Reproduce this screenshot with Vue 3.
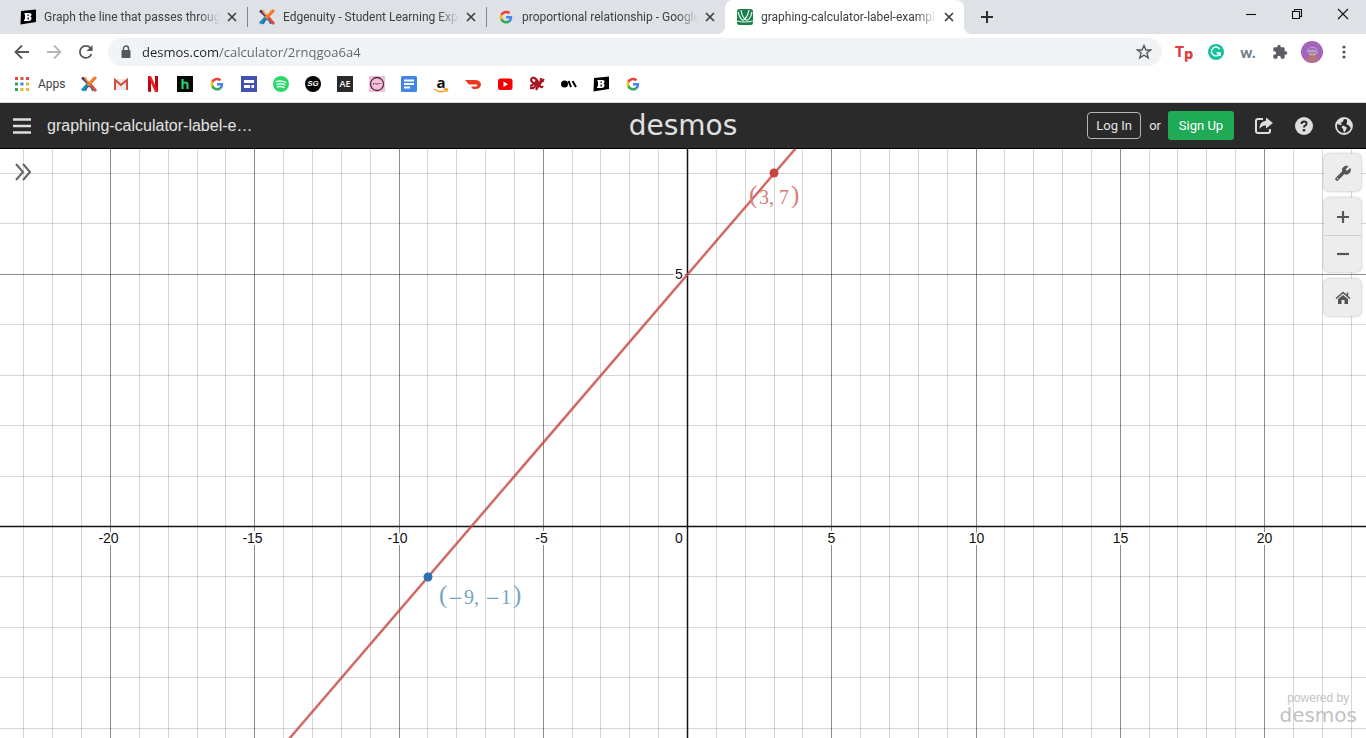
<script setup>
import { ref } from 'vue'

const url = ref('desmos.com/calculator/2rnqgoa6a4')
const tabs = [
  { icon: 'brainly', title: 'Graph the line that passes through the points' },
  { icon: 'edge', title: 'Edgenuity - Student Learning Experience' },
  { icon: 'google', title: 'proportional relationship - Google Search' },
  { icon: 'desmos', title: 'graphing-calculator-label-example', active: true },
]
const bookmarks = [
  ['edge', 'Edgenuity'], ['gmail', 'Gmail'], ['netflix', 'Netflix'], ['hulu', 'Hulu'], ['google', 'Google'],
  ['sites', 'Sites'], ['spotify', 'Spotify'], ['sg', 'SG'], ['ae', 'AE'], ['pink', 'Shop'], ['docs', 'Docs'],
  ['amazon', 'Amazon'], ['dash', 'DoorDash'], ['youtube', 'YouTube'], ['sx', 'SX'], ['dots', 'Music'],
  ['brainly', 'Brainly'], ['google', 'Google Search'],
].map(([icon, name]) => ({ icon, name }))

const unitX = 28.85
const unitY = 50.43
const px = (x) => Math.round(687 + x * unitX) + 0.5
const py = (y) => Math.round(377 - y * unitY) + 0.5
const columns = Array.from({ length: 47 }, (_, i) => i - 23)
const rows = [7, 6, 5, 4, 3, 2, 1, -1, -2, -3, -4]
const xLabels = [-20, -15, -10, -5, 5, 10, 15, 20]
const labelX = (n) => px(n) - (n < 0 ? 2 : 0)
</script>

<template>
  <div class="window">
    <svg class="defs" aria-hidden="true">
      <symbol id="brainly" viewBox="0 0 16 16"><path d="M1 2L16 0.500V13L0.500 15.500Z" fill="#000" /><path d="M4.500 4H9Q12 4 11.500 6Q11.300 7.200 10.300 7.600Q12 8.200 11.500 10Q11 12 8.500 12H4V10.500H5V5.500H4.500ZM7.500 5.500V7H8.700V5.500ZM7.500 8.500V10.500H8.900V8.500Z" fill="#fff" fill-rule="evenodd" /></symbol>
      <symbol id="edge" viewBox="0 0 16 16" fill="none" stroke-width="2.800">
        <path d="M1 1.500L7 7" stroke="#59366d" /><path d="M4 1Q8 11 12.500 1.500" stroke="#f2a33a" stroke-width="2" /><path d="M15 1L9.500 7" stroke="#ef7a2f" />
        <path d="M7 8L1 14.500" stroke="#1791b4" /><path d="M4 15Q8 5 12 15" stroke="#276db0" stroke-width="2" /><path d="M9 8L15 15" stroke="#df4b38" /><circle cx="8" cy="8" r="2" fill="#ef7a2f" />
      </symbol>
      <symbol id="google" viewBox="0 0 48 48">
        <g transform="translate(5 5) scale(.8)">
          <path fill="#EA4335" d="M24 9.500c3.540 0 6.710 1.220 9.210 3.600l6.850-6.850C35.900 2.380 30.470 0 24 0 14.620 0 6.510 5.380 2.560 13.220l7.980 6.190C12.430 13.720 17.740 9.500 24 9.500z" />
          <path fill="#4285F4" d="M46.980 24.550c0-1.570-.15-3.090-.38-4.550H24v9.020h12.940c-.58 2.960-2.260 5.480-4.780 7.180l7.730 6c4.510-4.180 7.090-10.360 7.090-17.650z" />
          <path fill="#FBBC05" d="M10.530 28.590A14.500 14.500 0 0 1 9.770 24c0-1.600.27-3.140.76-4.590l-7.980-6.190A23.900 23.900 0 0 0 0 24c0 3.880.92 7.540 2.560 10.780z" />
          <path fill="#34A853" d="M24 48c6.480 0 11.930-2.130 15.890-5.810l-7.730-6c-2.150 1.450-4.920 2.300-8.160 2.300-6.260 0-11.570-4.220-13.470-9.910l-7.980 6.190C6.510 42.620 14.620 48 24 48z" />
        </g>
      </symbol>
      <symbol id="desmos" viewBox="0 0 16 16"><rect width="16" height="16" rx="2.500" fill="#188049" /><path d="M1 3Q4 13 7.500 10.500Q11 7 12 1M4 1Q5 8 9 11Q13 12 15 3M0 12Q8 14 16 12" fill="none" stroke="#e9f8ef" stroke-width="1.200" /></symbol>
      <symbol id="gmail" viewBox="0 0 16 16"><path d="M1 3H15V14H1Z" fill="#eee8e7" /><path d="M2 14V4L8 9L14 4V14" fill="none" stroke="#d54b3d" stroke-width="2" /></symbol>
      <symbol id="netflix" viewBox="0 0 16 16"><path d="M3 0H6V16L3 15.500ZM10 0H13V15.500L10 16Z" fill="#b60710" /><path d="M3 0H6L13 15.500L10 16Z" fill="#ed1c25" /></symbol>
      <symbol id="hulu" viewBox="0 0 16 16"><path d="M0 0H16V16H0Z" fill="#050805" /><path d="M5.500 3V13M5.500 8Q5.500 6.500 8 6.500Q10.500 6.500 10.500 8.500V13" fill="none" stroke="#24ce72" stroke-width="2.200" /></symbol>
      <symbol id="sites" viewBox="0 0 16 16"><path d="M0 0H16V16H0Z" fill="#4253b1" /><path d="M3 4H13V7H3ZM3 9H9V12H3ZM10.500 9H13V12H10.500Z" fill="#fff" /></symbol>
      <symbol id="spotify" viewBox="0 0 16 16"><circle cx="8" cy="8" r="8" fill="#2bd66b" /><path d="M3.500 5.500Q8.500 4 12.700 6.500M4 8.300Q8.300 7 12 9M4.500 10.800Q8 10 11 11.500" fill="none" stroke="#eafff1" stroke-width="1.400" stroke-linecap="round" /></symbol>
      <symbol id="pink" viewBox="0 0 16 16"><path d="M0 0H16V16H0Z" fill="#f6bfd8" /><circle cx="8" cy="8" r="6.500" fill="none" stroke="#4c3041" stroke-width="1.300" /><path d="M4.500 7V9M6 7.500H7M8 7V9M9.500 7.500H11.500" stroke="#73445b" /></symbol>
      <symbol id="docs" viewBox="0 0 16 16"><rect width="16" height="16" rx="1.500" fill="#4285e8" /><path d="M3 4.500H13M3 8H13M3 11.500H9" stroke="#fff" stroke-width="1.800" /></symbol>
      <symbol id="dash" viewBox="0 0 16 16"><path d="M0 4H10Q15 4 16 8Q16 13 10 13H8L6 10.500H11Q13 10 12 8.500L4 8.500Z" fill="#ee3824" /></symbol>
      <symbol id="youtube" viewBox="0 0 16 16"><rect x="1" y="2.500" width="14.500" height="11.500" rx="2.500" fill="#f40000" /><path d="M6.500 5.500L11 8.200L6.500 11Z" fill="#fff" /></symbol>
      <symbol id="sx" viewBox="0 0 16 16"><path d="M7 3Q3 0 2 4Q3 7 7 8Q6 13 1 12M1 10Q5 9 8 4M7 3Q10 6 9 9Q12 7 12 2M7 14Q10 8 15 3M10 8Q12 13 14 10M11 4L15 5" fill="none" stroke="#a51522" stroke-width="2.200" /></symbol>
      <symbol id="dots" viewBox="0 0 16 16"><circle cx="3.500" cy="8" r="3.500" fill="#000" /><path d="M7.500 5L10 11M11.500 5L15 11" stroke="#000" stroke-width="2" /></symbol>
    </svg>

    <nav class="tabs" aria-label="Tabs">
      <div v-for="tab in tabs" :key="tab.title" class="tab" :class="{ active: tab.active }">
        <svg class="favicon"><use :href="'#' + tab.icon" /></svg>
        <span class="tab-title">{{ tab.title }}</span>
        <button class="close" aria-label="Close tab"><svg viewBox="0 0 10 10"><path d="M1 1L9 9M9 1L1 9" /></svg></button>
      </div>
      <button class="new-tab" aria-label="New tab"><svg width="12" height="12" viewBox="0 0 12 12"><path d="M6 0V12M0 6H12" /></svg></button>
      <div class="window-controls">
        <button aria-label="Minimize"><svg viewBox="0 0 12 12"><path d="M1 6.500H11" /></svg></button>
        <button aria-label="Restore"><svg viewBox="0 0 12 12"><path d="M1.500 3.500H8.500V10.500H1.500ZM3.500 3V1.500H10.500V8.500H9" /></svg></button>
        <button aria-label="Close"><svg viewBox="0 0 12 12"><path d="M1 1L11 11M11 1L1 11" /></svg></button>
      </div>
    </nav>

    <div class="toolbar">
      <button aria-label="Back"><svg class="nav" viewBox="0 0 16 16"><path d="M15 8H2M8 1.500L1.500 8L8 14.500" /></svg></button>
      <button aria-label="Forward"><svg class="nav faded" viewBox="0 0 16 16"><path d="M1 8H14M8 1.500L14.500 8L8 14.500" /></svg></button>
      <button aria-label="Reload"><svg class="nav" viewBox="0 0 16 16"><path d="M13.500 10A6 6 0 1 1 12.500 4L14 5.500" /><path d="M14.500 1V7H8.500Z" fill="#54575b" stroke="none" /></svg></button>
      <div class="address">
        <svg width="10" height="14" viewBox="0 0 10 14"><rect x="0.500" y="5" width="9" height="8" rx="1" fill="#54575b" /><path d="M2.500 5V3.500A2.500 2.500 0 0 1 7.500 3.500V5" fill="none" stroke="#54575b" stroke-width="1.400" /></svg>
        <input v-model="url" aria-label="Address" spellcheck="false" />
        <button aria-label="Bookmark"><svg width="16" height="16" viewBox="0 0 16 16"><path d="M8 1.500L9.900 6H14.700L10.900 9L12.300 14L8 11.200L3.700 14L5.100 9L1.300 6H6.100Z" fill="none" stroke="#54575b" stroke-width="1.400" /></svg></button>
      </div>
      <div class="extensions">
        <button class="tp" aria-label="Teleparty"><span>T</span><span class="low">p</span></button>
        <button aria-label="Grammarly"><svg viewBox="0 0 16 16"><circle cx="8" cy="8" r="8" fill="#15c39a" /><path d="M11.500 5A4.400 4.400 0 1 0 12 9H8.500M12 9V12" fill="none" stroke="#fff" stroke-width="1.500" /></svg></button>
        <button class="w" aria-label="Word tool">w.</button>
        <button aria-label="Extensions"><svg viewBox="0 0 24 24"><path fill="#5b5e62" d="M20.500 11H19V7a2 2 0 0 0-2-2h-4V3.500a2.500 2.500 0 0 0-5 0V5H4a2 2 0 0 0-2 2v3.800h1.500a2.700 2.700 0 0 1 0 5.400H2V20a2 2 0 0 0 2 2h3.800v-1.500a2.700 2.700 0 0 1 5.400 0V22H17a2 2 0 0 0 2-2v-4h1.500a2.500 2.500 0 0 0 0-5z" /></svg></button>
        <button aria-label="Profile"><svg class="avatar" viewBox="0 0 22 22"><circle cx="11" cy="11" r="11" fill="#a264bd" /><path d="M6 9Q11 3 16 8L17 13H7Z" fill="#b9a2c9" /><path d="M8 8.500Q12 6.500 15 9M7 12H16" fill="none" stroke="#8a5bb0" stroke-width="1.200" /><path d="M8 13.500H15" stroke="#e5b35c" stroke-width="1.500" /><path d="M4 18Q11 13 18 17Q15 21 11 21Q7 21 4 18Z" fill="#b47771" /></svg></button>
        <button aria-label="Menu"><svg viewBox="0 0 16 16" fill="#54575b"><circle cx="8" cy="3" r="1.600" /><circle cx="8" cy="8" r="1.600" /><circle cx="8" cy="13" r="1.600" /></svg></button>
      </div>
    </div>

    <nav class="bookmarks" aria-label="Bookmarks">
      <a class="apps" href="#apps">
        <svg width="14" height="14" viewBox="0 0 14 14" stroke-width="3"><path d="M0 1.500H3M5.500 1.500H8.500M11 1.500H14" stroke="#df4b3d" /><path d="M0 7H3M0 12.500H3" stroke="#36a35a" /><path d="M5.500 7H8.500" stroke="#4285e8" /><path d="M11 7H14M11 12.500H14M5.500 12.500H8.500" stroke="#efb52d" /></svg>
        Apps
      </a>
      <a v-for="item in bookmarks" :key="item.name" :href="'#' + item.icon" :aria-label="item.name">
        <span v-if="item.icon === 'sg'" class="badge sg">SG</span>
        <span v-else-if="item.icon === 'ae'" class="badge ae">AE</span>
        <span v-else-if="item.icon === 'amazon'" class="badge amazon">a<svg viewBox="0 0 16 5"><path d="M1 1Q8 6 13 2M10.500 1H14.500L13.500 4" fill="none" stroke="#f59b20" stroke-width="1.400" /></svg></span>
        <svg v-else class="favicon"><use :href="'#' + item.icon" /></svg>
      </a>
    </nav>

    <header class="header">
      <div class="left">
        <button aria-label="Open menu"><svg width="18" height="16" viewBox="0 0 18 16"><path d="M0 1.500H18M0 8H18M0 14.500H18" stroke="#dedede" stroke-width="2.600" /></svg></button>
        <h1>graphing-calculator-label-e…</h1>
      </div>
      <a class="logo" href="#home">desmos</a>
      <div class="right">
        <button class="login">Log In</button>
        <span class="or">or</span>
        <button class="signup">Sign Up</button>
        <button class="tool" aria-label="Share"><svg viewBox="0 0 18 18"><path d="M8 2H3Q1 2 1 4V14Q1 16 3 16H13Q15 16 15 14V12" fill="none" stroke="#dedede" stroke-width="2" /><path d="M11 0.500L18 6L11 11.500V8.500Q7 8 4.500 12Q4.500 4 11 3.700Z" fill="#dedede" /></svg></button>
        <button class="tool" aria-label="Help"><svg viewBox="0 0 18 18"><circle cx="9" cy="9" r="9" fill="#dedede" /><path d="M6.500 7Q6.500 4.500 9 4.500Q11.700 4.500 11.500 6.800Q11.300 8 10 8.700Q9 9.200 9 10.500" fill="none" stroke="#2a2a2a" stroke-width="2" /><circle cx="9" cy="13.300" r="1.300" fill="#2a2a2a" /></svg></button>
        <button class="tool" aria-label="Language"><svg viewBox="0 0 18 18"><circle cx="9" cy="9" r="8" fill="none" stroke="#dedede" stroke-width="1.800" /><path d="M2.500 4L7 1L9 2.500L7.500 5L5.500 6L7 8L5 8L2 6.500ZM8 8.500L12 10.500L11 13L9 16L8 12L6.500 10ZM12 2L15 4L17 9L15.500 11L14 8.500L11.500 7.500L12 5Z" fill="#dedede" /></svg></button>
      </div>
    </header>

    <main class="graph">
      <svg class="plot" viewBox="0 0 1366 589" preserveAspectRatio="xMidYMin slice" role="img" aria-label="Line through (3, 7) and (−9, −1)">
        <line v-for="n in columns" :key="'c' + n" :x1="px(n)" :x2="px(n)" y1="0" y2="589" :class="n % 5 ? 'minor' : 'major'" />
        <line v-for="n in rows" :key="'r' + n" x1="0" x2="1366" :y1="py(n)" :y2="py(n)" :class="n % 5 ? 'minor' : 'major'" />
        <path d="M0 377.500H1366M687.500 0V589" class="axis" />
        <text v-for="n in xLabels" :key="'x' + n" :x="labelX(n)" y="394" class="number">{{ n }}</text>
        <text x="679" y="394" class="number">0</text>
        <text x="679" y="130" class="number">5</text>
        <path d="M289 590L796 -1" class="line" />
        <circle cx="774" cy="24" r="4.500" fill="#c74440" />
        <circle cx="428" cy="428" r="4.500" fill="#2d70b3" />
        <text class="math red"><tspan x="749" y="54" class="paren">(</tspan><tspan x="759" y="55">3,</tspan><tspan x="779" y="55">7</tspan><tspan x="791" y="54" class="paren">)</tspan></text>
        <text class="math blue"><tspan x="439" y="454" class="paren">(</tspan><tspan x="448" y="455" class="minus">−</tspan><tspan x="464" y="455">9,</tspan><tspan x="485" y="455" class="minus">−</tspan><tspan x="501" y="455">1</tspan><tspan x="513" y="454" class="paren">)</tspan></text>
      </svg>
      <button class="expand" aria-label="Show expression list"><svg width="16" height="18" viewBox="0 0 16 18"><path d="M1 1L8 9L1 17M8 1L15 9L8 17" fill="none" stroke="#666" stroke-width="2" /></svg></button>
      <div class="controls">
        <button class="pad" aria-label="Graph settings"><svg viewBox="0 0 16 16"><path d="M2 14L9 7" stroke="#555" stroke-width="3.400" stroke-linecap="round" /><path d="M13 1.500L10.500 4V6H12.500L15 3.500A4 4 0 1 1 13 1.500Z" fill="#555" stroke="#555" /><circle cx="2.500" cy="13.500" r="0.700" fill="#eee" /></svg></button>
        <div class="zoom">
          <button aria-label="Zoom in"><svg viewBox="0 0 16 16"><path d="M8 2V14M2 8H14" stroke="#555" stroke-width="2.200" /></svg></button>
          <button aria-label="Zoom out"><svg viewBox="0 0 16 16"><path d="M2 8H14" stroke="#555" stroke-width="2.200" /></svg></button>
        </div>
        <button class="pad" aria-label="Default view"><svg viewBox="0 0 16 16"><path d="M1 8.500L8 2.500L15 8.500M12.500 5.500V2.500" fill="none" stroke="#555" stroke-width="1.600" /><path d="M3 9L8 5L13 9V14H9.500V10H6.500V14H3Z" fill="#555" /></svg></button>
      </div>
      <div class="powered"><span>powered by</span><span class="brand">desmos</span></div>
    </main>
  </div>
</template>

<style>
body { overflow: hidden; }
</style>

<style scoped>
.window { display: flex; flex-direction: column; height: 100vh; background: #fff; font-family: Roboto, "Open Sans", sans-serif; font-size: 12px; color: #3c4043; }
button { display: flex; align-items: center; justify-content: center; padding: 0; border: 0; background: none; color: inherit; font: inherit; }
a { color: inherit; text-decoration: none; }
svg { flex: none; }
.defs { display: none; }
.favicon { display: block; width: 16px; height: 16px; }
.tabs { display: flex; flex: none; height: 34px; padding-left: 8px; background: #dee1e6; }
.tab { position: relative; display: flex; flex: 0 1 239px; min-width: 0; box-sizing: border-box; align-items: center; padding: 0 7px 0 12px; border-radius: 8px 8px 0 0; }
.tab:nth-child(-n+2)::after { content: ""; position: absolute; top: 7px; right: -1px; width: 1px; height: 20px; background: #80868b; }
.tab.active { background: #fff; }
.tab.active::before, .tab.active::after { content: ""; position: absolute; bottom: 0; width: 8px; height: 8px; }
.tab.active::before { left: -8px; background: radial-gradient(circle at 0 0, #dee1e6 8px, #fff 8px); }
.tab.active::after { right: -8px; background: radial-gradient(circle at 100% 0, #dee1e6 8px, #fff 8px); }
.tab-title { flex: 1; min-width: 0; margin: 0 4px 0 8px; overflow: hidden; white-space: nowrap; line-height: 18px; mask-image: linear-gradient(to right, #000 88%, transparent); }
.close { width: 16px; height: 16px; }
.close svg { width: 10px; height: 10px; stroke: #3c4043; stroke-width: 1.700; }
.new-tab { width: 28px; margin-left: 9px; }
.new-tab svg { stroke: #2c2f32; stroke-width: 2; }
.window-controls { display: flex; height: 28px; margin-left: auto; }
.window-controls button { width: 46px; }
.window-controls svg { width: 12px; height: 12px; fill: none; stroke: #111; stroke-width: 1.100; }
.toolbar { display: flex; flex: none; height: 36px; align-items: center; padding: 0 6px; }
.toolbar > button { width: 32px; height: 32px; }
.nav { width: 16px; height: 16px; fill: none; stroke: #54575b; stroke-width: 1.800; }
.faded { stroke: #b5b7ba; }
.address { display: flex; flex: 1; height: 28px; align-items: center; margin-left: 6px; padding: 0 10px 0 13px; border-radius: 14px; background: #f1f3f4; }
.address input { flex: 1; min-width: 0; height: 20px; margin-left: 11px; padding: 0; border: 0; outline: 0; background: linear-gradient(to right, #202124 77px, #5f6368 77px); background-clip: text; color: transparent; font: 13px/20px "Open Sans", "Noto Sans", sans-serif; }
.extensions { display: flex; margin-left: 6px; }
.extensions button { width: 32px; height: 28px; }
.extensions svg { width: 16px; height: 16px; }
.extensions .avatar { width: 22px; height: 22px; }
.tp { color: #e23a43; }
.low { padding-top: 3px; }
.extensions .w { color: #727f8a; font: 900 15px/18px Lato, sans-serif; }
.extensions .tp { font: 800 14px/18px Inter, sans-serif; }
.bookmarks { display: flex; flex: none; height: 28px; align-items: center; padding: 0 0 4px 15px; border-bottom: 1px solid #dadce0; }
.bookmarks a + a { margin-right: 16px; }
.bookmarks .apps { display: flex; width: 66px; align-items: center; gap: 9px; line-height: 18px; }
.badge { display: flex; width: 16px; height: 16px; align-items: center; justify-content: center; background: #29292b; color: #fff; font: 9px/16px "Open Sans", sans-serif; }
.sg { border-radius: 8px; background: #000; font: italic bold 8px/16px "Liberation Sans", Arial, sans-serif; }
.ae { font-weight: 600; }
.amazon { flex-direction: column; background: none; color: #111; font: bold 15px/12px "Open Sans", sans-serif; }
.amazon svg { width: 16px; height: 5px; }
.header { display: grid; grid-template-columns: 1fr auto 1fr; flex: none; align-items: center; height: 45px; border-bottom: 1px solid #000; background: #2a2a2a; color: #e4e4e4; }
.left, .right { display: flex; align-items: center; }
.left { gap: 16px; padding-left: 13px; }
h1 { margin: 0; font: 16px/20px "Liberation Sans", Arial, sans-serif; white-space: nowrap; }
.logo { font: 28px/32px "DejaVu Sans", sans-serif; color: #e0e0e0; }
.right { justify-content: flex-end; padding-right: 2px; font: 13px/20px Roboto, sans-serif; }
.login { box-sizing: border-box; width: 54px; height: 27px; border: 1px solid #b5b5b5; border-radius: 4px; }
.or { margin: 0 7px 0 8px; }
.signup { width: 66px; height: 29px; margin-right: 10px; border-radius: 3px; background: #1faa56; color: #fff; }
.tool { width: 40px; height: 30px; }
.tool svg { width: 18px; height: 18px; }
.graph { position: relative; display: flex; flex: 1; min-height: 0; justify-content: space-between; align-items: flex-start; overflow: hidden; }
.plot { position: absolute; inset: 0; width: 100%; height: 100%; }
.minor { stroke: #000; stroke-opacity: 0.16; }
.major { stroke: #000; stroke-opacity: 0.45; }
.axis { fill: none; stroke: #111; stroke-width: 1.500; }
.number { font: 14px "Liberation Sans", Arial, sans-serif; fill: #111; stroke: #fff; stroke-width: 4px; paint-order: stroke; text-anchor: middle; }
.line { stroke: #c74440; stroke-opacity: 0.8; stroke-width: 2.500; fill: none; }
.math { font: 20px "Liberation Serif", serif; }
.paren { font-size: 25px; }
.minus { font: 18px "DejaVu Serif", serif; }
.red { fill: #d47d7a; }
.blue { fill: #78a5c5; }
.expand { position: relative; width: 22px; height: 22px; margin: 12px; }
.controls { position: relative; display: flex; flex-direction: column; gap: 7px; padding: 5px 5px 0 0; }
.controls svg { width: 16px; height: 16px; }
.controls button { width: 37px; height: 37px; }
.pad, .zoom { border-radius: 5px; background: #ededed; box-shadow: 0 0 3px #aaa; }
.zoom button + button { border-top: 1px solid #d0d0d0; }
.powered { position: absolute; right: 9px; bottom: 13px; display: flex; flex-direction: column; align-items: center; color: #c2c2c2; font: 12px/14px "Liberation Sans", Arial, sans-serif; }
.brand { font: 20px/20px "DejaVu Sans", sans-serif; }
</style>
